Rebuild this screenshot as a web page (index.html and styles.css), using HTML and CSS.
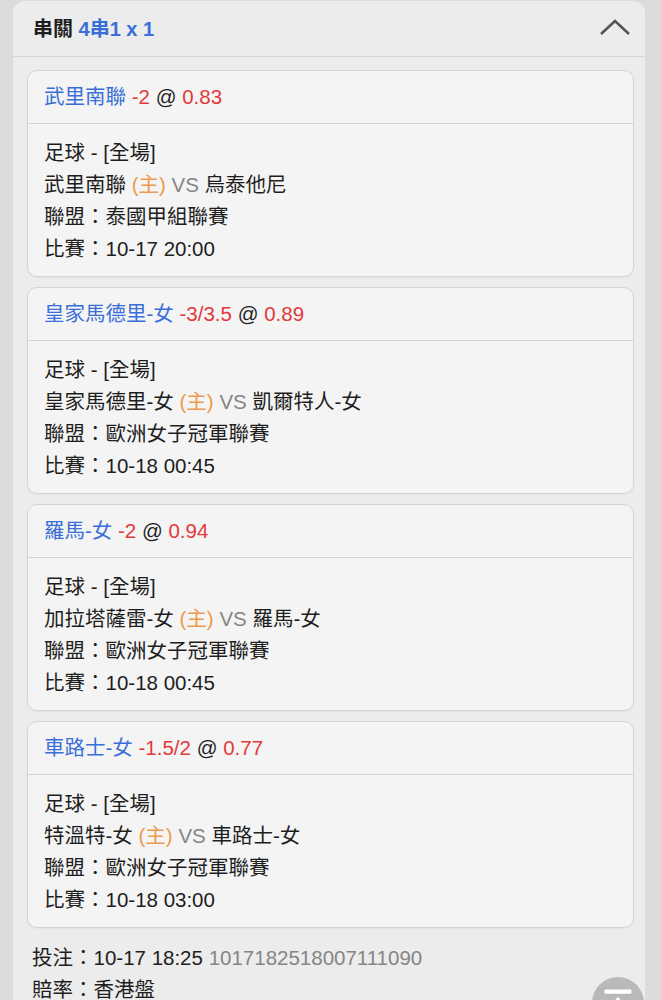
FILE: index.html
```html
<!DOCTYPE html>
<html lang="zh-Hant">
<head>
  <meta charset="UTF-8" />
  <meta name="viewport" content="width=device-width, initial-scale=1" />
  <title>串關</title>
  <link rel="stylesheet" href="styles.css">
</head>
<body>
  <div class="panel">
    <div class="panel-head">
      <div class="panel-title">串關 <span class="blue">4串1 x 1</span></div>
      <svg class="chevron" viewBox="0 0 32 18"><path d="M2 16 L16 3 L30 16" /></svg>
    </div>

    <div class="bets">
      <div class="bet">
        <div class="bet-head"><span class="blue">武里南聯</span> <span class="red">-2</span> @ <span class="red">0.83</span></div>
        <div class="bet-body">
          <div>足球 - [全場]</div>
          <div>武里南聯 <span class="home">(主)</span> <span class="vs">VS</span> 烏泰他尼</div>
          <div>聯盟：泰國甲組聯賽</div>
          <div>比賽：10-17 20:00</div>
        </div>
      </div>

      <div class="bet">
        <div class="bet-head"><span class="blue">皇家馬德里-女</span> <span class="red">-3/3.5</span> @ <span class="red">0.89</span></div>
        <div class="bet-body">
          <div>足球 - [全場]</div>
          <div>皇家馬德里-女 <span class="home">(主)</span> <span class="vs">VS</span> 凱爾特人-女</div>
          <div>聯盟：歐洲女子冠軍聯賽</div>
          <div>比賽：10-18 00:45</div>
        </div>
      </div>

      <div class="bet">
        <div class="bet-head"><span class="blue">羅馬-女</span> <span class="red">-2</span> @ <span class="red">0.94</span></div>
        <div class="bet-body">
          <div>足球 - [全場]</div>
          <div>加拉塔薩雷-女 <span class="home">(主)</span> <span class="vs">VS</span> 羅馬-女</div>
          <div>聯盟：歐洲女子冠軍聯賽</div>
          <div>比賽：10-18 00:45</div>
        </div>
      </div>

      <div class="bet">
        <div class="bet-head"><span class="blue">車路士-女</span> <span class="red">-1.5/2</span> @ <span class="red">0.77</span></div>
        <div class="bet-body">
          <div>足球 - [全場]</div>
          <div>特溫特-女 <span class="home">(主)</span> <span class="vs">VS</span> 車路士-女</div>
          <div>聯盟：歐洲女子冠軍聯賽</div>
          <div>比賽：10-18 03:00</div>
        </div>
      </div>
    </div>

    <div class="summary">
      <div>投注：10-17 18:25 <span class="gray">1017182518007111090</span></div>
      <div>賠率：香港盤</div>
    </div>
  </div>

  <button class="to-top" title="Back to top">
    <svg viewBox="0 0 50 50"><rect x="12" y="12" width="26" height="4" rx="1" /><path d="M25 19 L37 33 L13 33 Z" /></svg>
  </button>
</body>
</html>
```

FILE: styles.css
```css
:root {
  --page-bg: #dcdcdc;
  --panel-bg: #ececec;
  --card-bg: #f4f4f4;
  --line: #d5d5d5;
  --text: #1e1e1e;
  --blue: #3a6ed8;
  --red: #e23a3a;
  --orange: #ee9a4e;
  --gray: #868686;
}

body {
  margin: 0;
  background: var(--page-bg);
  color: var(--text);
  font-family: 'Liberation Sans', 'Noto Sans CJK TC', sans-serif;
  font-size: 20.5px;
  overflow: hidden;
  height: 1000px;
}

.panel {
  margin: 1px 16px 0 13px;
  background: var(--panel-bg);
  border-radius: 12px 12px 0 0;
}

.panel-head {
  height: 55px;
  display: flex;
  align-items: center;
  justify-content: space-between;
  padding: 0 14px 0 20px;
  border-bottom: 1px solid var(--line);
}

.panel-title {
  font-size: 20px;
  font-weight: 700;
  margin-top: -2px;
}

.chevron {
  width: 32px;
  height: 18px;
  margin-top: -3px;
  fill: none;
  stroke: #555;
  stroke-width: 2.6;
}

.blue { color: var(--blue); }
.red { color: var(--red); }
.home { color: var(--orange); }
.vs { color: var(--gray); }
.gray { color: var(--gray); }

.bets {
  display: flex;
  flex-direction: column;
  gap: 10px;
  padding: 13px 11px 0 14px;
}

.bet {
  background: var(--card-bg);
  border: 1px solid var(--line);
  border-radius: 10px;
  box-shadow: 0 1px 2px rgba(0,0,0,0.04);
}

.bet-head {
  height: 52px;
  line-height: 52px;
  padding: 0 16px;
  border-bottom: 1px solid var(--line);
}

.bet-body {
  padding: 13px 16px 11px;
  line-height: 32px;
}

.summary {
  padding: 14px 19px 0;
  line-height: 32px;
}

/* Back to top */
.to-top {
  position: fixed;
  left: 592px;
  top: 977px;
  width: 52px;
  height: 52px;
  padding: 0;
  border: none;
  border-radius: 50%;
  background: #b9b9b9;
  cursor: pointer;
}

.to-top svg {
  width: 52px;
  height: 52px;
  fill: #fff;
}
```
